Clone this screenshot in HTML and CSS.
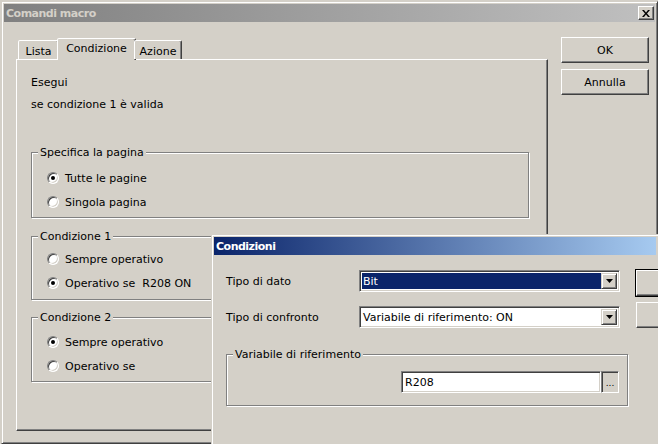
FILE: index.html
```html
<!DOCTYPE html>
<html>
<head>
<meta charset="utf-8">
<link rel="stylesheet" href="styles.css">
</head>
<body>
<div class="window main-window">
  <div class="titlebar inactive">
    <span class="title">Comandi macro</span>
    <span class="close-btn"><svg width="8" height="7" viewBox="0 0 8 7"><path d="M0 0h2l2 2.4 2-2.4h2l-3 3.5 3 3.5h-2l-2-2.4-2 2.4h-2l3-3.5z"/></svg></span>
  </div>
  <div class="main">
    <div class="tabctl">
      <div class="tabs">
        <div class="tab tab-lista">Lista</div>
        <div class="tab tab-cond selected">Condizione</div>
        <div class="tab tab-azione">Azione</div>
      </div>
      <div class="panel">
        <div class="line">Esegui</div>
        <div class="line line-2">se condizione 1 è valida</div>
        <fieldset class="group g-pagina">
          <legend>Specifica la pagina</legend>
          <div class="radio-row"><span class="radio checked"></span>Tutte le pagine</div>
          <div class="radio-row"><span class="radio"></span>Singola pagina</div>
        </fieldset>
        <fieldset class="group g-cond1">
          <legend>Condizione 1</legend>
          <div class="radio-row"><span class="radio"></span>Sempre operativo</div>
          <div class="radio-row"><span class="radio checked"></span>Operativo se<span class="cond-value">R208 ON</span></div>
        </fieldset>
        <fieldset class="group g-cond2">
          <legend>Condizione 2</legend>
          <div class="radio-row"><span class="radio checked"></span>Sempre operativo</div>
          <div class="radio-row"><span class="radio"></span>Operativo se</div>
        </fieldset>
      </div>
    </div>
    <div class="side-buttons">
      <div class="btn">OK</div>
      <div class="btn">Annulla</div>
    </div>
  </div>
</div>

<div class="window dialog">
  <div class="titlebar active">
    <span class="title">Condizioni</span>
  </div>
  <div class="dlg-body">
    <div class="dlg-form">
      <div class="form-row">
        <span class="label">Tipo di dato</span>
        <div class="combo">
          <span class="combo-text selected-text">Bit</span>
          <span class="combo-btn"><svg width="7" height="4" viewBox="0 0 7 4"><path d="M0 0h7L3.5 4z"/></svg></span>
        </div>
      </div>
      <div class="form-row row-2">
        <span class="label">Tipo di confronto</span>
        <div class="combo">
          <span class="combo-text">Variabile di riferimento: ON</span>
          <span class="combo-btn"><svg width="7" height="4" viewBox="0 0 7 4"><path d="M0 0h7L3.5 4z"/></svg></span>
        </div>
      </div>
      <fieldset class="group g-var">
        <legend>Variabile di riferimento</legend>
        <div class="var-row">
          <div class="textbox">R208</div>
          <div class="browse-btn">...</div>
        </div>
      </fieldset>
    </div>
    <div class="dlg-buttons">
      <div class="btn btn-default"></div>
      <div class="btn"></div>
    </div>
  </div>
</div>
</body>
</html>
```

FILE: styles.css
```css
* { box-sizing: border-box; }
html, body { margin: 0; padding: 0; }
body {
  width: 658px;
  height: 444px;
  overflow: hidden;
  position: relative;
  background: #d4d0c8;
  font: 11px/13px "DejaVu Sans", sans-serif;
  color: #000;
}

.window {
  background: #d4d0c8;
  border: 1px solid;
  border-color: #d4d0c8 #404040 #404040 #d4d0c8;
  box-shadow: inset 1px 1px #fff, inset -1px -1px #808080;
  padding: 2px;
}
.main-window {
  margin: 1px 0 0 1px;
  width: 657px;
  height: 443px;
  overflow: hidden;
}

.titlebar {
  height: 18px;
  display: flex;
  align-items: center;
  padding-left: 2px;
}
.titlebar .title {
  font-weight: bold;
  letter-spacing: -0.5px;
  flex: 1;
}
.inactive {
  background: linear-gradient(to right, #808080, #c0c0c0);
  color: #d4d0c8;
}
.active {
  background: linear-gradient(to right, #0a246a, #a6caf0);
  color: #fff;
}
.close-btn {
  width: 16px;
  height: 14px;
  margin-right: 1px;
  background: #d4d0c8;
  border: 1px solid;
  border-color: #fff #404040 #404040 #fff;
  box-shadow: inset -1px -1px #808080;
  display: flex;
  align-items: center;
  justify-content: center;
}

.main {
  display: flex;
  align-items: flex-start;
  padding: 15px 0 0 12px;
}
.tabctl { display: flex; flex-direction: column; }
.tabs {
  height: 22px;
  display: flex;
  align-items: flex-end;
  padding-left: 2px;
  position: relative;
  z-index: 1;
}
.tab {
  height: 19px;
  border: 1px solid;
  border-bottom: none;
  border-color: #fff #404040 transparent #fff;
  border-radius: 2px 2px 0 0;
  box-shadow: inset -1px 0 #808080;
  background: #d4d0c8;
  text-align: center;
  padding-top: 4px;
}
.tab-lista { width: 41px; }
.tab-cond { width: 75px; }
.tab-azione { width: 48px; }
.tab.selected {
  height: 22px;
  margin: 0 -2px -1px;
  width: 79px;
  padding-top: 3px;
}

.panel {
  width: 532px;
  height: 372px;
  border: 1px solid;
  border-color: #fff #404040 #404040 #fff;
  box-shadow: inset -1px -1px #808080;
  padding: 16px 0 0 14px;
}
.line-2 { margin-top: 9px; }

.group {
  margin: 0;
  border: 1px solid #808080;
  box-shadow: inset 1px 1px #fff, 1px 1px #fff;
  padding: 0;
  min-width: 0;
}
.group legend {
  margin-left: 6px;
  padding: 0 2px;
  background: #d4d0c8;
  line-height: 13px;
}
.g-pagina { width: 498px; height: 72px; margin-top: 35px; padding-top: 12px; }
.g-cond1 { width: 498px; height: 70px; margin-top: 12px; padding-top: 9px; }
.g-cond2 { width: 498px; height: 71px; margin-top: 11px; padding-top: 11px; }

.radio-row {
  height: 14px;
  display: flex;
  align-items: center;
  margin-left: 15px;
}
.radio-row + .radio-row { margin-top: 10px; }
.radio {
  width: 12px;
  height: 12px;
  border-radius: 50%;
  background: #fff;
  border: 1px solid;
  border-color: #808080 #fff #fff #808080;
  box-shadow: inset 1px 1px #404040, inset -1px -1px #d4d0c8;
  margin-right: 6px;
  display: flex;
  align-items: center;
  justify-content: center;
}
.radio.checked::after {
  content: "";
  width: 4px;
  height: 4px;
  border-radius: 50%;
  background: #000;
}
.cond-value { margin-left: 7px; }

.side-buttons {
  margin-left: 13px;
  display: flex;
  flex-direction: column;
  gap: 6px;
}
.btn {
  width: 88px;
  height: 26px;
  border: 1px solid;
  border-color: #fff #404040 #404040 #fff;
  box-shadow: inset -1px -1px #808080;
  background: #d4d0c8;
  display: flex;
  align-items: center;
  justify-content: center;
}

/* Dialog (floating window over the main one) */
.dialog {
  position: absolute;
  left: 211px;
  top: 234px;
  width: 447px;
  height: 210px;
  border-right: none;
  border-bottom: none;
  box-shadow: inset 1px 1px #fff;
  overflow: hidden;
}
.dlg-body {
  display: flex;
  align-items: flex-start;
  padding: 15px 0 0 12px;
}
.dlg-form { width: 402px; flex: none; }
.form-row {
  height: 22px;
  display: flex;
  align-items: center;
}
.row-2 { margin-top: 14px; }
.label { width: 133px; }
.combo {
  width: 261px;
  height: 22px;
  display: flex;
  border: 1px solid;
  border-color: #808080 #fff #fff #808080;
  box-shadow: inset 1px 1px #404040, inset -1px -1px #d4d0c8;
  background: #fff;
  padding: 2px;
}
.combo-text {
  flex: 1;
  display: flex;
  align-items: center;
  padding-left: 1px;
}
.selected-text {
  background: #0a246a;
  color: #fff;
}
.combo-btn {
  width: 16px;
  display: flex;
  align-items: center;
  justify-content: center;
  background: #d4d0c8;
  border: 1px solid;
  border-color: #d4d0c8 #404040 #404040 #d4d0c8;
  box-shadow: inset 1px 1px #fff, inset -1px -1px #808080;
}
.g-var {
  width: 402px;
  height: 58px;
  margin-top: 20px;
  padding-top: 10px;
}
.var-row { display: flex; margin-left: 174px; }
.textbox {
  width: 200px;
  height: 22px;
  border: 1px solid;
  border-color: #808080 #fff #fff #808080;
  box-shadow: inset 1px 1px #404040, inset -1px -1px #d4d0c8;
  background: #fff;
  padding: 4px 0 0 3px;
}
.browse-btn {
  width: 18px;
  height: 22px;
  border: 1px solid;
  border-color: #808080 #fff #fff #808080;
  box-shadow: inset 1px 1px #404040, inset -1px -1px #d4d0c8;
  font-size: 9px;
  line-height: 9px;
  display: flex;
  align-items: flex-end;
  justify-content: center;
  padding-bottom: 4px;
}
.dlg-buttons {
  margin-left: 8px;
  display: flex;
  flex-direction: column;
  gap: 6px;
  flex: none;
}
.dlg-buttons .btn { width: 75px; }
.btn-default {
  outline: 1px solid #000;
  outline-offset: 0;
}
```
